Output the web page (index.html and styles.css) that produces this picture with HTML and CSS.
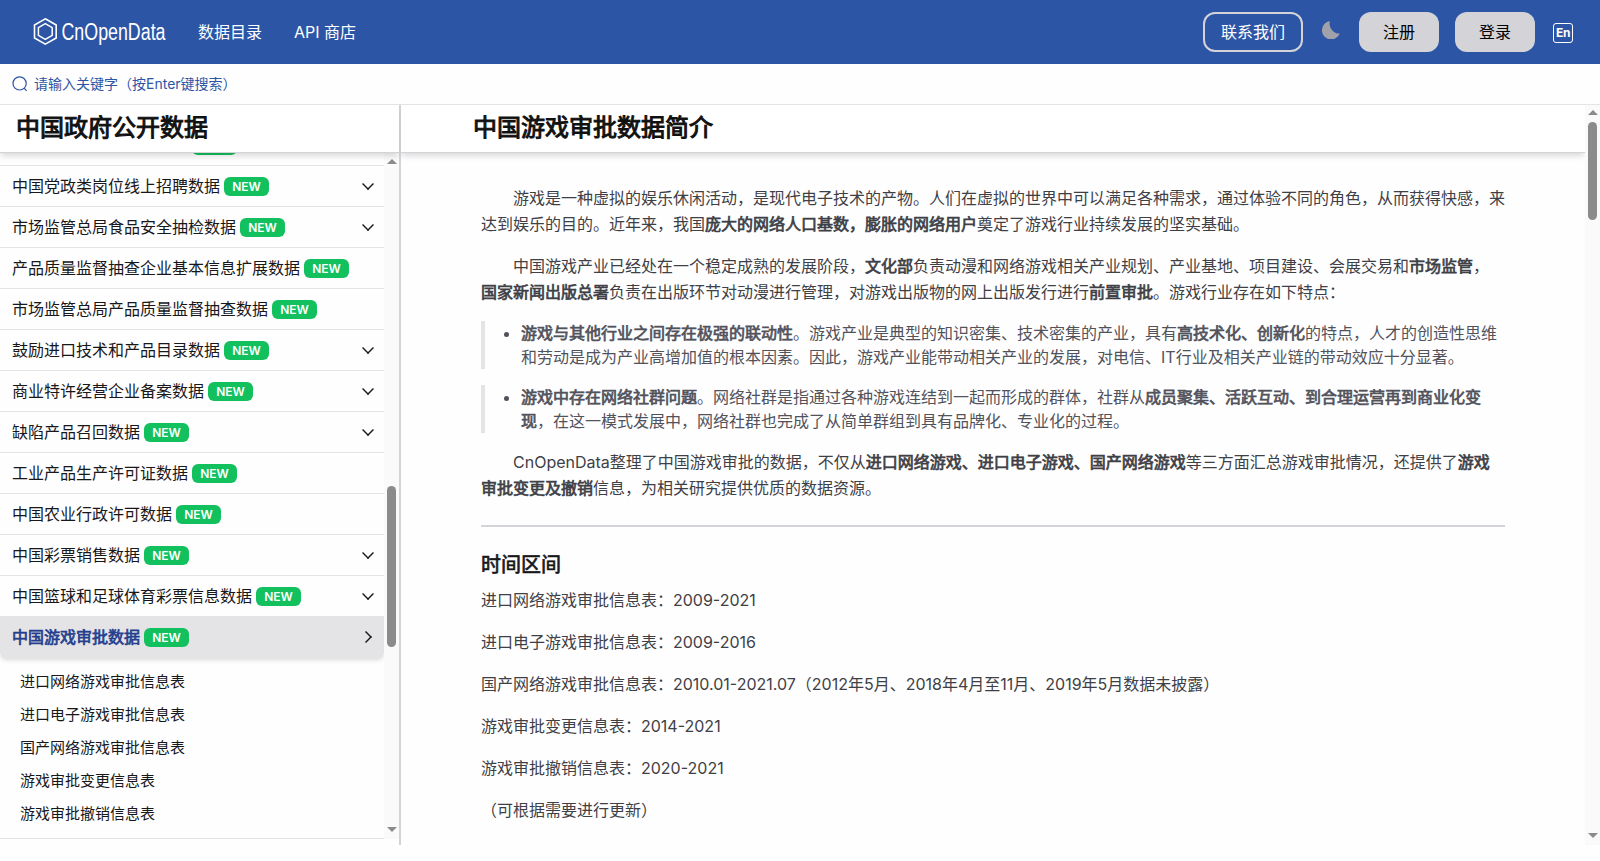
FILE: index.html
```
<!DOCTYPE html>
<html lang="zh-CN">
<head>
    <meta charset="UTF-8">
    <title>中国游戏审批数据简介 - CnOpenData</title>
    <link rel="stylesheet" href="styles.css">
</head>
<body>
    <header class="navbar">
        <a class="logo" href="#">
            <svg width="140" height="32" viewBox="0 0 140 32" fill="none" stroke="#fff">
                <path d="M13.3 2.8 24.2 9v13L13.3 28.2 2.5 22V9z" stroke-width="1.6"/>
                <path d="M13.3 7.6 20.2 11.6v7.8L13.3 23.4 6.4 19.4v-7.8z" stroke-width="1.5"/>
                <text class="logo-text" x="29.5" y="23.5" textLength="104" lengthAdjust="spacingAndGlyphs">CnOpenData</text>
            </svg>
        </a>
        <nav class="nav-links">
            <a href="#">数据目录</a>
            <a href="#">API 商店</a>
        </nav>
        <div class="nav-actions">
            <a class="btn btn-outline" href="#">联系我们</a>
            <svg class="moon" width="18" height="18" viewBox="2 2 16 16" fill="#a1a1aa"><path d="M17.8 13.2A8.2 8.2 0 1 1 9 2.1C7.6 7.6 12 13.6 17.8 13.2z"/></svg>
            <a class="btn btn-solid" href="#">注册</a>
            <a class="btn btn-solid" href="#">登录</a>
            <span class="lang">En</span>
        </div>
    </header>

    <div class="search">
        <svg width="16" height="16" viewBox="0 0 16 16" fill="none" stroke="#2d55a5" stroke-width="1.2"><circle cx="7.6" cy="7.4" r="6.6"/><path d="M12.2 12.2 14.6 14.8"/></svg>
        <span>请输入关键字（按Enter键搜索）</span>
    </div>

    <div class="page">
        <aside class="sidebar">
            <h2 class="panel-title sidebar-title">中国政府公开数据</h2>
            <div class="sidebar-body">
                <ul class="menu">
                    <li class="item"><span>中国上市公司行政处罚数</span><b class="new">NEW</b></li>
                    <li class="item"><span>中国党政类岗位线上招聘数据</span><b class="new">NEW</b><i class="chevron"></i></li>
                    <li class="item"><span>市场监管总局食品安全抽检数据</span><b class="new">NEW</b><i class="chevron"></i></li>
                    <li class="item"><span>产品质量监督抽查企业基本信息扩展数据</span><b class="new">NEW</b></li>
                    <li class="item"><span>市场监管总局产品质量监督抽查数据</span><b class="new">NEW</b></li>
                    <li class="item"><span>鼓励进口技术和产品目录数据</span><b class="new">NEW</b><i class="chevron"></i></li>
                    <li class="item"><span>商业特许经营企业备案数据</span><b class="new">NEW</b><i class="chevron"></i></li>
                    <li class="item"><span>缺陷产品召回数据</span><b class="new">NEW</b><i class="chevron"></i></li>
                    <li class="item"><span>工业产品生产许可证数据</span><b class="new">NEW</b></li>
                    <li class="item"><span>中国农业行政许可数据</span><b class="new">NEW</b></li>
                    <li class="item"><span>中国彩票销售数据</span><b class="new">NEW</b><i class="chevron"></i></li>
                    <li class="item"><span>中国篮球和足球体育彩票信息数据</span><b class="new">NEW</b><i class="chevron"></i></li>
                    <li class="item active"><span>中国游戏审批数据</span><b class="new">NEW</b><i class="chevron right"></i></li>
                    <li>
                        <ul class="submenu">
                            <li>进口网络游戏审批信息表</li>
                            <li>进口电子游戏审批信息表</li>
                            <li>国产网络游戏审批信息表</li>
                            <li>游戏审批变更信息表</li>
                            <li>游戏审批撤销信息表</li>
                        </ul>
                    </li>
                </ul>
                <div class="scrollbar side-scroll">
                    <i class="arrow up"></i>
                    <div class="track"><div class="thumb"></div></div>
                    <i class="arrow down"></i>
                </div>
            </div>
        </aside>

        <main class="main">
            <div class="content">
                <h1 class="panel-title main-title">中国游戏审批数据简介</h1>
                <article class="article">
                    <p class="indent">游戏是一种虚拟的娱乐休闲活动，是现代电子技术的产物。人们在虚拟的世界中可以满足各种需求，通过体验不同的角色，从而获得快感，来达到娱乐的目的。近年来，我国<strong>庞大的网络人口基数，膨胀的网络用户</strong>奠定了游戏行业持续发展的坚实基础。</p>
                    <p class="indent">中国游戏产业已经处在一个稳定成熟的发展阶段，<strong>文化部</strong>负责动漫和网络游戏相关产业规划、产业基地、项目建设、会展交易和<strong>市场监管</strong>，<strong>国家新闻出版总署</strong>负责在出版环节对动漫进行管理，对游戏出版物的网上出版发行进行<strong>前置审批</strong>。游戏行业存在如下特点：</p>
                    <blockquote>
                        <ul>
                            <li><strong>游戏与其他行业之间存在极强的联动性</strong>。游戏产业是典型的知识密集、技术密集的产业，具有<strong>高技术化、创新化</strong>的特点，人才的创造性思维和劳动是成为产业高增加值的根本因素。因此，游戏产业能带动相关产业的发展，对电信、IT行业及相关产业链的带动效应十分显著。</li>
                        </ul>
                    </blockquote>
                    <blockquote>
                        <ul>
                            <li><strong>游戏中存在网络社群问题</strong>。网络社群是指通过各种游戏连结到一起而形成的群体，社群从<strong>成员聚集、活跃互动、到合理运营再到商业化变现</strong>，在这一模式发展中，网络社群也完成了从简单群组到具有品牌化、专业化的过程。</li>
                        </ul>
                    </blockquote>
                    <p class="indent">CnOpenData整理了中国游戏审批的数据，不仅从<strong>进口网络游戏、进口电子游戏、国产网络游戏</strong>等三方面汇总游戏审批情况，还提供了<strong>游戏审批变更及撤销</strong>信息，为相关研究提供优质的数据资源。</p>
                    <hr>
                    <h3>时间区间</h3>
                    <p>进口网络游戏审批信息表：2009-2021</p>
                    <p>进口电子游戏审批信息表：2009-2016</p>
                    <p>国产网络游戏审批信息表：2010.01-2021.07（2012年5月、2018年4月至11月、2019年5月数据未披露）</p>
                    <p>游戏审批变更信息表：2014-2021</p>
                    <p>游戏审批撤销信息表：2020-2021</p>
                    <p>（可根据需要进行更新）</p>
                </article>
            </div>
            <div class="scrollbar main-scroll">
                <i class="arrow up"></i>
                <div class="track"><div class="thumb"></div></div>
                <i class="arrow down"></i>
            </div>
        </main>
    </div>
</body>
</html>
```
FILE: styles.css
```
*{
    box-sizing: border-box;
}

html, body{
    margin: 0;
    padding: 0;
    height: 100%;
    overflow: hidden;
    background: #fefefe;
    color: #18181b;
    font-family: Inter, "Noto Sans CJK SC", sans-serif;
    font-size: 16px;
    line-height: 24px;
}

ul{
    margin: 0;
    padding: 0;
    list-style: none;
}

a{
    color: inherit;
    text-decoration: none;
}

/* top bar */
.navbar{
    display: flex;
    align-items: center;
    height: 64px;
    padding: 0 24px 0 32px;
    background: #2d55a5;
    color: #fff;
}

.logo{
    display: flex;
    margin-right: 26px;
}

.logo-text{
    font-family: "Liberation Sans", Arial, sans-serif;
    font-size: 23px;
    fill: #fff;
    stroke: none;
}

.nav-links{
    display: flex;
    gap: 32px;
}

.nav-actions{
    display: flex;
    align-items: center;
    margin-left: auto;
}

.btn{
    display: flex;
    align-items: center;
    justify-content: center;
    height: 40px;
    border-radius: 12px;
}

.btn-outline{
    width: 100px;
    border: 2px solid #d4d4d8;
}

.btn-solid{
    width: 80px;
    margin-right: 16px;
    background: #d4d4d8;
    color: #000;
}

.moon{
    margin: 0 19px;
    position: relative;
    top: -2px;
}

.lang{
    width: 20px;
    height: 20px;
    margin: 2px 3px 0 2px;
    border: 1.5px solid #fff;
    border-radius: 3px;
    font-size: 12px;
    font-weight: 700;
    letter-spacing: -0.5px;
    line-height: 18px;
    text-align: center;
}

/* search row */
.search{
    display: flex;
    align-items: center;
    gap: 6px;
    height: 40px;
    padding-left: 12px;
    color: #2d55a5;
    font-size: 14px;
}

.page{
    display: flex;
    height: 741px;
    border-top: 1px solid #e4e4e7;
}

/* regular glyphs thickened evenly, lighter than the real bold */
.panel-title,
.item.active span,
.article strong,
.article h3{
    font-weight: 400;
    -webkit-text-stroke: 0.7px currentColor;
}

.panel-title{
    flex: none;
    height: 48px;
    margin: 0;
    border-bottom: 1px solid #d4d4d8;
    box-shadow: 0 4px 6px -1px rgba(0, 0, 0, 0.15);
    background: #fff;
    color: #111;
    font-size: 24px;
    line-height: 46px;
    -webkit-text-stroke-width: 1px;
    position: relative;
    z-index: 1;
}

/* left column */
.sidebar{
    display: flex;
    flex-direction: column;
    width: 401px;
    border-right: 2px solid #d4d4d8;
}

.sidebar-title{
    padding-left: 16px;
}

.sidebar-body{
    display: flex;
    height: 686px;
    overflow: hidden;
}

.menu{
    flex: 1;
    margin-top: -28px;
    border-bottom: 1px solid #e4e4e7;
}

.item{
    display: flex;
    align-items: center;
    height: 41px;
    padding: 0 8px 0 12px;
    border-bottom: 1px solid #e4e4e7;
}

.item.active{
    background: #e4e4e7;
    color: #253f8e;
    border-radius: 0 0 6px 6px;
    box-shadow: 0 3px 5px -1px rgba(0, 0, 0, 0.15);
}

.new{
    width: 45px;
    height: 19px;
    margin-left: 4px;
    border-radius: 6px;
    background: #12c15e;
    color: #fff;
    font-size: 12px;
    font-weight: 600;
    line-height: 19px;
    text-align: center;
}

.chevron{
    width: 12px;
    height: 12px;
    margin: -4px 2px 0 auto;
    border: solid #18181b;
    border-width: 0 2px 2px 0;
    transform: rotate(45deg) scale(0.7);
}

.chevron.right{
    margin: 0 4px 0 auto;
    transform: rotate(-45deg) scale(0.7);
}

.submenu{
    padding: 7px 0 9px 20px;
    font-size: 15px;
    line-height: 33px;
}

/* scrollbars */
.scrollbar{
    display: flex;
    flex-direction: column;
    align-items: center;
    flex: none;
    width: 15px;
    background: #fafafa;
}

.track{
    flex: 1;
}

.thumb{
    width: 9px;
    border-radius: 5px;
    background: #8b8b8b;
}

.arrow{
    border: solid transparent;
    border-width: 0 5px;
}

.arrow.up{
    margin: 5px 0 7px;
    border-bottom: 5px solid #8b8b8b;
}

.arrow.down{
    margin: 5px 0 7px;
    border-top: 5px solid #8b8b8b;
}

.side-scroll .arrow.up{
    margin: 6px 0;
}

.side-scroll .thumb{
    height: 161px;
    margin-top: 316px;
}

.main-scroll .thumb{
    height: 98px;
}

/* right column */
.main{
    display: flex;
    flex: 1;
}

.content{
    flex: 1;
    overflow: hidden;
}

.main-title{
    padding-left: 72px;
}

.article{
    padding: 32px 80px 0;
    color: #3f3f46;
    line-height: 26px;
}

.article p{
    margin: 0 0 16px;
}

.article .indent{
    text-indent: 32px;
}

blockquote{
    margin: 0 0 16px;
    padding-left: 10px;
    border-left: 4px solid #e4e4e7;
    color: #52525b;
    line-height: 24px;
}

blockquote ul{
    padding-left: 26px;
    list-style: disc;
}

hr{
    height: 2px;
    margin: 24px 0;
    border: 0;
    background: #d4d4d8;
}

.article h3{
    margin: 0 0 8px;
    color: #18181b;
    font-size: 20px;
    line-height: 28px;
}
```
